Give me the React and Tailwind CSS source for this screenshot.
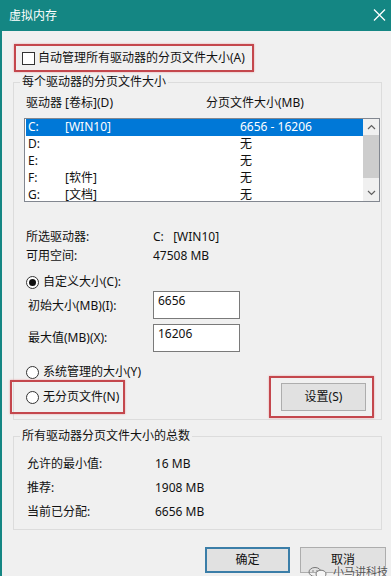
import React from "react";

const drives = [
  { d: "C:", label: "[WIN10]", size: "6656 - 16206", sel: true },
  { d: "D:", label: "", size: "无" },
  { d: "E:", label: "", size: "无" },
  { d: "F:", label: "[软件]", size: "无" },
  { d: "G:", label: "[文档]", size: "无" },
];

function Radio({ checked }) {
  return (
    <span className="w-[13px] h-[13px] rounded-full border border-[#333] bg-white flex items-center justify-center shrink-0">
      {checked && <span className="w-[7px] h-[7px] rounded-full bg-[#111]" />}
    </span>
  );
}

function InfoRow({ label, value, h = "h-[19px]", pl = "pl-[6px]", w = "w-[127px]" }) {
  return (
    <div className={`flex items-center ${h} ${pl}`}>
      <span className={`${w} shrink-0`}>{label}</span>
      <span className="whitespace-pre">{value}</span>
    </div>
  );
}

export default function App() {
  return (
    <div className="w-[391px] h-[576px] overflow-hidden bg-[#f0f0f0] relative text-[12px] leading-[16px] text-[#111] font-['Noto_Sans','Noto_Sans_CJK_SC',sans-serif]">
      {/* title bar */}
      <div className="h-[31px] bg-[#148683] flex items-center justify-between pl-[9px] pr-[5px] text-white">
        <span className="text-[12px]">虚拟内存</span>
        <svg width="13" height="12" viewBox="0 0 13 12" className="mt-[-1px]">
          <path d="M1 0.5 L12 11.5 M12 0.5 L1 11.5" stroke="#fff" strokeWidth="1.3" fill="none" />
        </svg>
      </div>

      <div className="h-[545px] border-l-2 border-[#148683] pl-[11px] flex flex-col">
        {/* auto manage checkbox */}
        <div className="mt-[13px] ml-[1px] w-[240px] h-[28px] border-2 border-[#c4474d] shadow-[0_0_2px_#e9a3a6] flex items-center pl-[6px] gap-[3px]">
          <span className="w-[13px] h-[13px] border border-[#333] bg-white shrink-0" />
          <span>自动管理所有驱动器的分页文件大小(A)</span>
        </div>

        {/* per-drive group */}
        <fieldset className="mt-[2px] w-[369px] h-[346px] border border-[#dcdcdc] px-[6px] min-w-0">
          <legend className="px-[2px] leading-[16px]">每个驱动器的分页文件大小</legend>

          <div className="mt-[5px] h-[16px] pl-[6px] flex items-center">
            <span className="w-[180px]">驱动器 [卷标](D)</span>
            <span>分页文件大小(MB)</span>
          </div>

          <div className="mt-[7px] ml-[4px] w-[356px] h-[84px] border border-[#828790] bg-white flex">
            <div className="flex-1 pl-[1px] overflow-hidden">
              {drives.map((r) => (
                <div
                  key={r.d}
                  className={`h-[17px] leading-[16px] flex pl-[2px] ${r.sel ? "bg-[#0078d7] text-white" : ""}`}
                >
                  <span className="w-[37px]">{r.d}</span>
                  <span className="w-[175px]">{r.label}</span>
                  <span>{r.size}</span>
                </div>
              ))}
            </div>
            <div className="w-[16px] bg-[#f0f0f0] flex flex-col">
              <div className="h-[16px] flex items-center justify-center">
                <svg width="9" height="6" viewBox="0 0 9 6">
                  <path d="M1 5 L4.5 1.5 L8 5" stroke="#606060" strokeWidth="1.2" fill="none" />
                </svg>
              </div>
              <div className="h-[43px] bg-[#cdcdcd]" />
              <div className="flex-1" />
              <div className="h-[16px] flex items-center justify-center">
                <svg width="9" height="6" viewBox="0 0 9 6">
                  <path d="M1 1 L4.5 4.5 L8 1" stroke="#606060" strokeWidth="1.2" fill="none" />
                </svg>
              </div>
            </div>
          </div>

          <div className="mt-[25px]">
            <InfoRow label="所选驱动器:" value={"C:   [WIN10]"} />
            <InfoRow label="可用空间:" value="47508 MB" />
          </div>

          <div className="mt-[9px] h-[16px] pl-[6px] flex items-center gap-[4px]">
            <Radio checked />
            <span>自定义大小(C):</span>
          </div>

          <div className="mt-[1px] h-[28px] pl-[8px] flex items-center">
            <span className="w-[125px] pt-[2px]">初始大小(MB)(I):</span>
            <div className="w-[87px] h-[28px] border border-[#7a7a7a] bg-white pl-[4px] pt-[1px]">6656</div>
          </div>
          <div className="mt-[5px] h-[28px] pl-[8px] flex items-center">
            <span className="w-[125px]">最大值(MB)(X):</span>
            <div className="w-[87px] h-[28px] border border-[#7a7a7a] bg-white pl-[4px] pt-[1px] self-start">16206</div>
          </div>

          <div className="mt-[12px] h-[16px] pl-[6px] flex items-center gap-[4px]">
            <Radio />
            <span>系统管理的大小(Y)</span>
          </div>

          <div className="mt-[-4px] h-[42px] flex items-center justify-between">
            <div className="ml-[-10px] w-[115px] h-[34px] border-2 border-[#c4474d] shadow-[0_0_2px_#e9a3a6] flex items-center pl-[14px] gap-[4px]">
              <Radio />
              <span>无分页文件(N)</span>
            </div>
            <div className="mr-[1px] w-[105px] h-[42px] border-2 border-[#c4474d] shadow-[0_0_2px_#e9a3a6] flex items-center pl-[10px]">
              <div className="w-[85px] h-[28px] bg-[#e1e1e1] border border-[#adadad] flex items-center justify-center">
                设置(S)
              </div>
            </div>
          </div>
        </fieldset>

        {/* totals group */}
        <fieldset className="mt-[8px] w-[369px] h-[102px] border border-[#dcdcdc] px-[6px] min-w-0">
          <legend className="px-[2px] leading-[16px]">所有驱动器分页文件大小的总数</legend>
          <div className="mt-[8px]">
            <InfoRow label="允许的最小值:" value="16 MB" h="h-[24px]" pl="pl-[7px]" w="w-[128px]" />
            <InfoRow label="推荐:" value="1908 MB" h="h-[24px]" pl="pl-[7px]" w="w-[128px]" />
            <InfoRow label="当前已分配:" value="6656 MB" h="h-[24px]" pl="pl-[7px]" w="w-[128px]" />
          </div>
        </fieldset>

        <div className="mt-[17px] ml-[192px] flex gap-[10px]">
          <div className="w-[85px] h-[26px] bg-[#e1e1e1] border-2 border-[#3b7ea8] flex items-center justify-center">
            确定
          </div>
          <div className="w-[86px] h-[26px] bg-[#e1e1e1] border border-[#adadad] flex items-center justify-center">
            取消
          </div>
        </div>
      </div>

      {/* watermark */}
      <div className="absolute right-[3px] bottom-[-4px] flex items-center gap-[5px] text-[11px] text-[#555] [text-shadow:0_0_2px_#fff]">
        <svg width="20" height="13" viewBox="0 0 20 13">
          <ellipse cx="7" cy="6" rx="6" ry="4.5" stroke="#777" strokeWidth="1" fill="none" />
          <ellipse cx="13" cy="8" rx="5" ry="3.8" stroke="#777" strokeWidth="1" fill="#f6f6f6" />
          <circle cx="5" cy="5" r="0.8" fill="#777" />
          <circle cx="9" cy="5" r="0.8" fill="#777" />
        </svg>
        <span>小马讲科技</span>
      </div>
    </div>
  );
}
